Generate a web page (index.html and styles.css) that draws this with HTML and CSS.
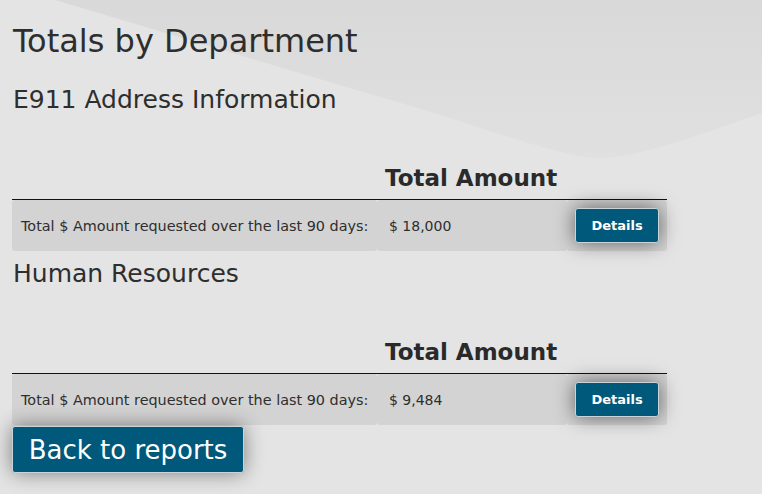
FILE: index.html
```html
<!DOCTYPE html>
<html lang="en">
<head>
<meta charset="utf-8">
<title>Totals by Department</title>
<link rel="stylesheet" href="styles.css">
</head>
<body>
<svg class="bg-shape" width="762" height="494" viewBox="0 0 762 494" aria-hidden="true">
  <defs>
    <linearGradient id="g" x1="0" y1="0" x2="0" y2="1">
      <stop offset="0" stop-color="#d9d9d9"/>
      <stop offset="1" stop-color="#e0e0e0"/>
    </linearGradient>
  </defs>
  <path d="M55,0 L380,97 C470,122 560,158 598,158 C640,158 700,134 762,113 L762,0 Z" fill="url(#g)"/>
</svg>
<main class="page">
  <h1 class="title">Totals by Department</h1>

  <section class="dept">
    <h2 class="dept-name">E911 Address Information</h2>
    <table class="totals">
      <thead>
        <tr><th class="c1"></th><th class="c2">Total Amount</th><th class="c3"></th></tr>
      </thead>
      <tbody>
        <tr>
          <td class="c1">Total $ Amount requested over the last 90 days:</td>
          <td class="c2">$ 18,000</td>
          <td class="c3"><button class="btn-details">Details</button></td>
        </tr>
      </tbody>
    </table>
  </section>

  <section class="dept">
    <h2 class="dept-name">Human Resources</h2>
    <table class="totals">
      <thead>
        <tr><th class="c1"></th><th class="c2">Total Amount</th><th class="c3"></th></tr>
      </thead>
      <tbody>
        <tr>
          <td class="c1">Total $ Amount requested over the last 90 days:</td>
          <td class="c2">$ 9,484</td>
          <td class="c3"><button class="btn-details">Details</button></td>
        </tr>
      </tbody>
    </table>
  </section>

  <button class="btn-back">Back to reports</button>
</main>
</body>
</html>
```

FILE: styles.css
```css
html, body {
  margin: 0;
  padding: 0;
}
body {
  background: #e4e4e4;
  font-family: "DejaVu Sans", "Noto Sans", sans-serif;
  color: #2e2e2e;
  width: 762px;
  height: 494px;
  overflow: hidden;
  position: relative;
}
.bg-shape {
  position: absolute;
  left: 0;
  top: 0;
  z-index: 0;
}
.page {
  position: relative;
  z-index: 1;
  padding: 0 12px;
}
.title {
  margin: 0;
  padding-top: 21px;
  font-size: 32px;
  font-weight: 400;
  line-height: 40px;
  padding-left: 1px;
}
.dept-name {
  margin: 0;
  font-size: 25px;
  font-weight: 400;
  line-height: 30px;
  padding-left: 1px;
}
.title + .dept .dept-name {
  margin-top: 24px;
}
.dept + .dept .dept-name {
  margin-top: 8px;
}
.totals {
  border-collapse: separate;
  border-spacing: 0;
  table-layout: fixed;
  width: 655px;
  margin-top: 48px;
}
.totals th,
.totals td {
  box-sizing: border-box;
}
.totals th {
  font-size: 23px;
  font-weight: 700;
  text-align: left;
  padding: 0 0 6px 0;
  line-height: 30px;
  border-bottom: 1px solid #111;
  color: #2a2a2a;
  white-space: nowrap;
}
.totals th.c2 {
  padding-left: 8px;
}
.c1 { width: 365px; }
.c2 { width: 190px; }
.c3 { width: 100px; }
.totals td {
  background: #d3d3d3;
  height: 51px;
  padding: 0;
  vertical-align: middle;
  border-radius: 3px;
  color: #2e2e2e;
}
.totals td.c1 {
  padding-left: 9px;
  font-size: 14.4px;
  white-space: nowrap;
}
.totals td.c2 {
  padding-left: 12px;
  font-size: 14px;
}
.totals td.c3 {
  padding-left: 8px;
}
.btn-details {
  display: block;
  font-family: inherit;
  background: #00587a;
  color: #fff;
  border: 1px solid #c9d3d8;
  border-radius: 3px;
  width: 84px;
  height: 35px;
  padding: 0;
  font-size: 13px;
  font-weight: 700;
  box-shadow: 0 0 20px rgba(0, 0, 0, 0.55);
  cursor: pointer;
}
.btn-back {
  font-family: inherit;
  display: block;
  margin-top: 1px;
  background: #00587a;
  color: #fff;
  border: 1px solid #c9d3d8;
  border-radius: 3px;
  width: 232px;
  height: 47px;
  padding: 0;
  font-size: 26px;
  font-weight: 400;
  box-shadow: 0 0 20px rgba(0, 0, 0, 0.45);
  cursor: pointer;
}
```
